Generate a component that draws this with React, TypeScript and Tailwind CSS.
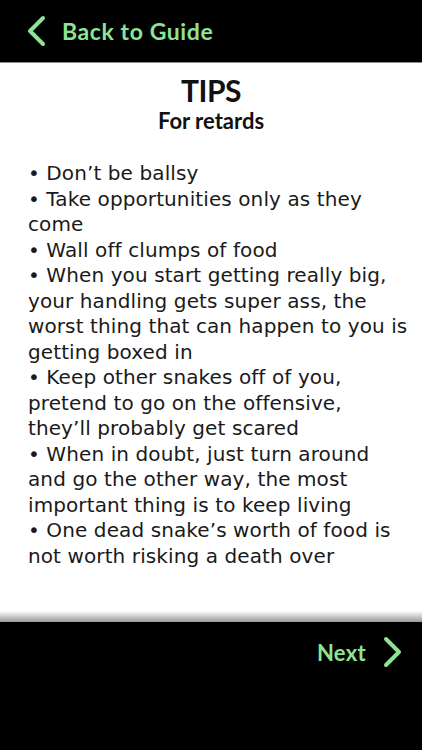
import React from 'react';

const lines = [
  '• Don’t be ballsy',
  '• Take opportunities only as they',
  'come',
  '• Wall off clumps of food',
  '• When you start getting really big,',
  'your handling gets super ass, the',
  'worst thing that can happen to you is',
  'getting boxed in',
  '• Keep other snakes off of you,',
  'pretend to go on the offensive,',
  'they’ll probably get scared',
  '• When in doubt, just turn around',
  'and go the other way, the most',
  'important thing is to keep living',
  '• One dead snake’s worth of food is',
  'not worth risking a death over',
];

function Chevron({ dir }: { dir: 'left' | 'right' }) {
  return (
    <svg width="22" height="32" viewBox="0 0 22 32" fill="none" aria-hidden="true">
      <path
        d={dir === 'left' ? 'M18 3 L5 16 L18 29' : 'M4 3 L17 16 L4 29'}
        stroke="#8ee495"
        strokeWidth="4"
        strokeLinecap="round"
        strokeLinejoin="round"
      />
    </svg>
  );
}

export default function App() {
  return (
    <div className="flex h-[750px] w-[422px] flex-col bg-black font-['DejaVu_Sans',sans-serif]">
      {/* Header */}
      <div className="flex h-[63px] items-center gap-[15px] border-b border-[#8a8a8a] pl-[25px]">
        <Chevron dir="left" />
        <span className="font-['Lato',sans-serif] text-[23px] font-bold tracking-[0.6px] text-[#8ee495]">
          Back to Guide
        </span>
      </div>

      {/* Content */}
      <div className="flex h-[559px] flex-col bg-gradient-to-b from-white from-[98%] to-[#9a9a9a]">
        <div className="pt-[9px] text-center font-['Lato',sans-serif] text-[#111]">
          <div className="text-[30px] font-bold leading-[36px] tracking-[-0.5px]">TIPS</div>
          <div className="text-[22px] font-bold leading-[26px]">For retards</div>
        </div>
        <div className="mt-[27px] pl-[28px] text-[20px] leading-[25.5px] tracking-[0.1px] text-[#1a1a1a]">
          {lines.map((l, i) => (
            <div key={i} className="whitespace-nowrap">
              {l}
            </div>
          ))}
        </div>
      </div>

      {/* Footer */}
      <div className="flex h-[60px] items-center justify-end gap-[16px] pr-[18px]">
        <span className="font-['Lato',sans-serif] text-[22px] font-bold tracking-[0.3px] text-[#8ee495]">Next</span>
        <Chevron dir="right" />
      </div>
    </div>
  );
}
